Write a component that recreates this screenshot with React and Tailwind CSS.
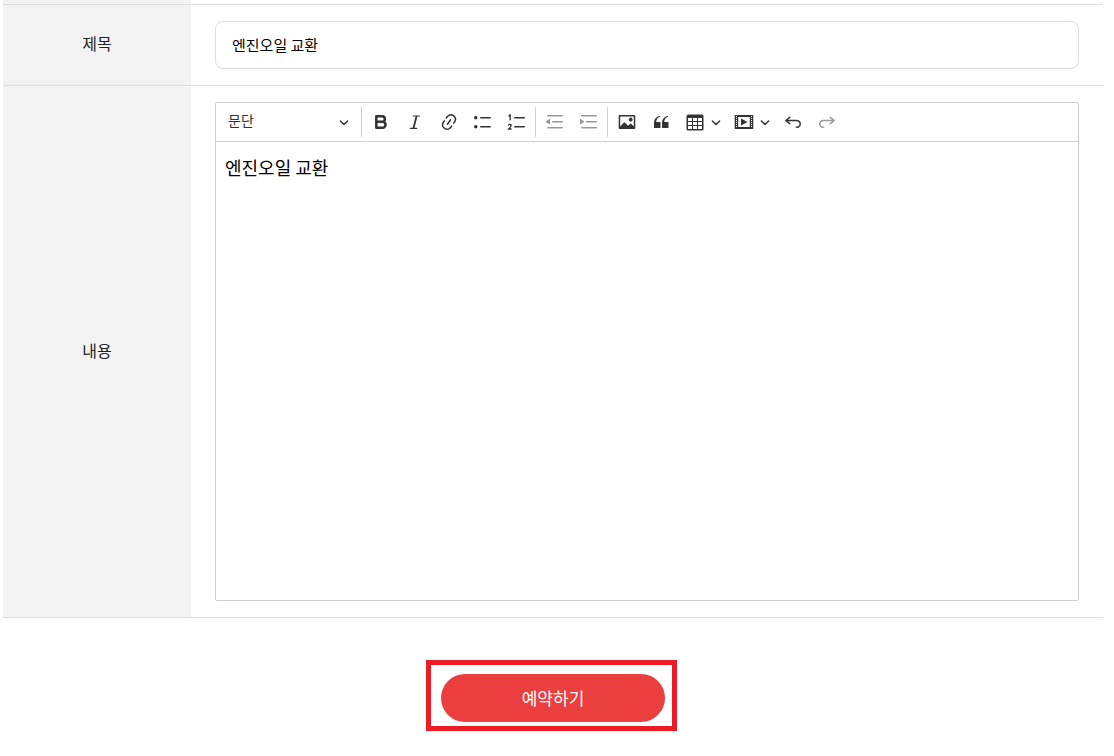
import { useState } from "react";

const icons = {
  link: "M11.077 15l.991-1.416a.75.75 0 1 1 1.229.86l-1.148 1.64a.748.748 0 0 1-.217.206 5.251 5.251 0 0 1-8.503-5.955.741.741 0 0 1 .12-.274l1.147-1.639a.75.75 0 1 1 1.228.86L4.933 10.7l.006.003a3.75 3.75 0 0 0 6.132 4.294l.006.004zm5.494-5.335a.748.748 0 0 1-.12.274l-1.147 1.639a.75.75 0 1 1-1.228-.86l.86-1.23a3.75 3.75 0 0 0-6.144-4.301l-.86 1.229a.75.75 0 0 1-1.229-.86l1.148-1.64a.748.748 0 0 1 .217-.206 5.251 5.251 0 0 1 8.503 5.955zm-4.563-2.532a.75.75 0 0 1 .184 1.045l-3.155 4.505a.75.75 0 1 1-1.229-.86l3.155-4.506a.75.75 0 0 1 1.045-.184z",
  image: "M6.91 10.54c.26-.23.64-.21.88.03l3.36 3.14 2.23-2.06a.64.64 0 0 1 .87 0l2.52 2.97V4.5H3.2v10.12l3.71-4.08zm10.27-7.51c.6 0 1.09.47 1.09 1.05v11.84c0 .59-.49 1.06-1.09 1.06H2.79c-.6 0-1.09-.47-1.09-1.06V4.08c0-.58.49-1.05 1.1-1.05h14.38zm-5.22 5.56a1.96 1.96 0 1 1 3.4-1.96 1.96 1.96 0 0 1-3.4 1.96z",
  quote: "M3 10.423a6.5 6.5 0 0 1 6.056-6.408l.038.67C6.448 5.423 5.354 7.663 5.22 10H9c.552 0 .5.432.5.986v4.511c0 .554-.448.503-1 .503h-5c-.552 0-.5-.449-.5-1.003v-4.574zm8 0a6.5 6.5 0 0 1 6.056-6.408l.038.67c-2.646.739-3.74 2.979-3.873 5.315H17c.552 0 .5.432.5.986v4.511c0 .554-.448.503-1 .503h-5c-.552 0-.5-.449-.5-1.003v-4.574z",
  table: "M3 6v3h4V6H3zm0 4v3h4v-3H3zm0 4v3h4v-3H3zm5 3h4v-3H8v3zm5 0h4v-3h-4v3zm4-4v-3h-4v3h4zm0-4V6h-4v3h4zm1.5 8a1.5 1.5 0 0 1-1.5 1.5H3A1.5 1.5 0 0 1 1.5 17V4c.222-.863 1.068-1.5 2-1.5h13c.932 0 1.778.637 2 1.5v13zM12 13v-3H8v3h4zm0-4V6H8v3h4z",
  media: "M18.68 3.03c.6 0 .59-.03.59.55v12.84c0 .59.01.56-.59.56H1.29c-.6 0-.59.03-.59-.56V3.58c0-.58-.01-.55.6-.55h17.38zM15.77 15V5H4.2v10h11.57zM2 4v1h1V4H2zm0 2v1h1V6H2zm0 2v1h1V8H2zm0 2v1h1v-1H2zm0 2v1h1v-1H2zm0 2v1h1v-1H2zM17 4v1h1V4h-1zm0 2v1h1V6h-1zm0 2v1h1V8h-1zm0 2v1h1v-1h-1zm0 2v1h1v-1h-1zm0 2v1h1v-1h-1zM7 6.5l6.5 3.5L7 13.5z",
  undo: "m5.042 9.367 2.189 1.837a.75.75 0 0 1-.965 1.149l-3.788-3.18a.747.747 0 0 1-.21-.284.75.75 0 0 1 .17-.945L6.23 4.762a.75.75 0 1 1 .964 1.15L4.863 7.866h8.917A.75.75 0 0 1 14 7.9a4 4 0 1 1-1.477 7.718l.344-1.489a2.5 2.5 0 1 0 1.094-4.73l.008-.032H5.042z",
};

const Icon = ({ name, children }) => (
  <svg viewBox="0 0 20 20" className="size-5 shrink-0" fill="currentColor" fillRule="evenodd" aria-hidden="true">
    {name ? <path d={icons[name]} /> : children}
  </svg>
);

const Chevron = ({ className = "" }) => (
  <svg viewBox="0 0 10 10" className={`size-[10px] shrink-0 ${className}`} fill="none" stroke="currentColor" strokeWidth="1.5" strokeLinecap="round" strokeLinejoin="round" aria-hidden="true">
    <path d="M1.4 4 5 7.5 8.6 4" />
  </svg>
);

const ToolButton = ({ label, disabled, children }) => (
  <button
    type="button"
    aria-label={label}
    disabled={disabled}
    className="flex h-8 w-8 items-center justify-center rounded-xs hover:bg-gray-100 disabled:text-[#999]"
  >
    {children}
  </button>
);

const DropButton = ({ label, children }) => (
  <button type="button" aria-label={label} className="flex h-8 items-center gap-[6px] rounded-xs pl-[6px] pr-[5px] hover:bg-gray-100">
    {children}
    <Chevron />
  </button>
);

const Separator = () => <span className="mr-px h-[30px] w-px bg-[#ccced1]" />;

const Toolbar = () => (
  <div className="flex min-h-[39px] flex-wrap items-center gap-[2px] border-b border-[#ccced1] text-[#333]">
    <div className="relative w-[143px]">
      <select aria-label="제목 스타일" className="block h-8 w-full appearance-none pb-1 pl-3 pr-6 text-sm outline-none">
        <option>문단</option>
      </select>
      <Chevron className="pointer-events-none absolute right-[10px] top-[11px]" />
    </div>
    <Separator />
    <ToolButton label="굵게">
      <Icon>
        <path d="M5.3 4.3h5.8a2.75 2.75 0 0 1 0 5.5H5.3zm0 5.5h6.3a2.95 2.95 0 0 1 0 5.9H5.3z" fill="none" stroke="currentColor" strokeWidth="2.5" strokeLinejoin="round" />
      </Icon>
    </ToolButton>
    <ToolButton label="기울임꼴">
      <Icon>
        <path d="M8.2 4h6.3M5.4 16.4h6.3" fill="none" stroke="currentColor" strokeWidth="1.2" strokeLinecap="round" />
        <path d="M11.6 4 8.5 16.2" fill="none" stroke="currentColor" strokeWidth="1.8" />
      </Icon>
    </ToolButton>
    <ToolButton label="링크">
      <Icon name="link" />
    </ToolButton>
    <ToolButton label="불릿 목록">
      <Icon>
        <circle cx="2.75" cy="5.75" r="1.75" />
        <circle cx="2.75" cy="14.75" r="1.75" />
        <path d="M7.75 5.75h9.5M7.75 14.75h9.5" stroke="currentColor" strokeWidth="1.5" strokeLinecap="round" />
      </Icon>
    </ToolButton>
    <ToolButton label="번호 목록">
      <Icon>
        <path d="M7.75 5.75h9.5M7.75 14.75h9.5" stroke="currentColor" strokeWidth="1.5" strokeLinecap="round" />
        <path d="M1.6 4.1 3.2 3v5.2M1.4 13.6c.1-1.8 3-1.7 2.8.1-.1 1.2-1.8 2-2.7 3.3h3" fill="none" stroke="currentColor" strokeWidth="1.3" />
      </Icon>
    </ToolButton>
    <Separator />
    <ToolButton label="내어쓰기" disabled>
      <Icon>
        <path d="M2.75 3.75h14.5M7.75 9.75h9.5M2.75 15.75h14.5" stroke="currentColor" strokeWidth="1.5" strokeLinecap="round" />
        <path d="M4.368 6.95.98 9.358a.4.4 0 0 0 .013.661l3.39 2.207A.4.4 0 0 0 5 11.892V7.275a.4.4 0 0 0-.632-.326z" />
      </Icon>
    </ToolButton>
    <ToolButton label="들여쓰기" disabled>
      <Icon>
        <path d="M2.75 3.75h14.5M7.75 9.75h9.5M2.75 15.75h14.5" stroke="currentColor" strokeWidth="1.5" strokeLinecap="round" />
        <path d="M1.632 6.95 5.02 9.358a.4.4 0 0 1-.013.661l-3.39 2.207A.4.4 0 0 1 1 11.892V7.275a.4.4 0 0 1 .632-.326z" />
      </Icon>
    </ToolButton>
    <Separator />
    <ToolButton label="이미지 삽입">
      <Icon name="image" />
    </ToolButton>
    <ToolButton label="인용 단락">
      <Icon name="quote" />
    </ToolButton>
    <DropButton label="표 삽입">
      <Icon name="table" />
    </DropButton>
    <DropButton label="미디어 삽입">
      <Icon name="media" />
    </DropButton>
    <ToolButton label="실행 취소">
      <Icon name="undo" />
    </ToolButton>
    <ToolButton label="다시 실행" disabled>
      <Icon>
        <path d={icons.undo} transform="translate(20 0) scale(-1 1)" />
      </Icon>
    </ToolButton>
  </div>
);

const Row = ({ id, label, children }) => (
  <div className="flex border-b border-[#ddd]">
    <label htmlFor={id} className="flex w-[188px] shrink-0 items-center justify-center bg-[#f3f3f3] pb-1 text-base text-[#222]">
      {label}
    </label>
    <div className="min-w-0 flex-1 px-6 py-4">{children}</div>
  </div>
);

const App = () => {
  const [title, setTitle] = useState("엔진오일 교환");
  const [content, setContent] = useState("엔진오일 교환");

  return (
    <form
      onSubmit={(e) => e.preventDefault()}
      className="bg-white pl-[3px] pr-[11px] font-['Noto_Sans_CJK_KR',sans-serif] text-black"
    >
      {/* bas de la ligne précédente */}
      <div className="border-b border-[#ddd]">
        <div className="h-1 w-[188px] bg-[#f3f3f3]" />
      </div>

      <Row id="title" label="제목">
        <input
          id="title"
          type="text"
          value={title}
          onChange={(e) => setTitle(e.target.value)}
          className="block h-12 w-full rounded-lg border border-[#ddd] px-4 pb-[2px] text-[15px] outline-none"
        />
      </Row>

      <Row id="content" label="내용">
        <div className="rounded-xs border border-[#ccced1]">
          <Toolbar />
          <textarea
            id="content"
            value={content}
            onChange={(e) => setContent(e.target.value)}
            spellCheck={false}
            className="block h-[458px] w-full resize-none px-[9px] py-[11px] text-lg outline-none"
          />
        </div>
      </Row>

      <div className="flex justify-center pb-6 pr-[3px] pt-[42px]">
        <div className="border-5 border-[#ed1c24] pb-1 pl-[10px] pr-[7px] pt-[9px]">
          <button type="submit" className="block h-12 w-56 rounded-full bg-[#eb3f3f] pb-px text-[17px] text-white">
            예약하기
          </button>
        </div>
      </div>
    </form>
  );
};

export default App;
